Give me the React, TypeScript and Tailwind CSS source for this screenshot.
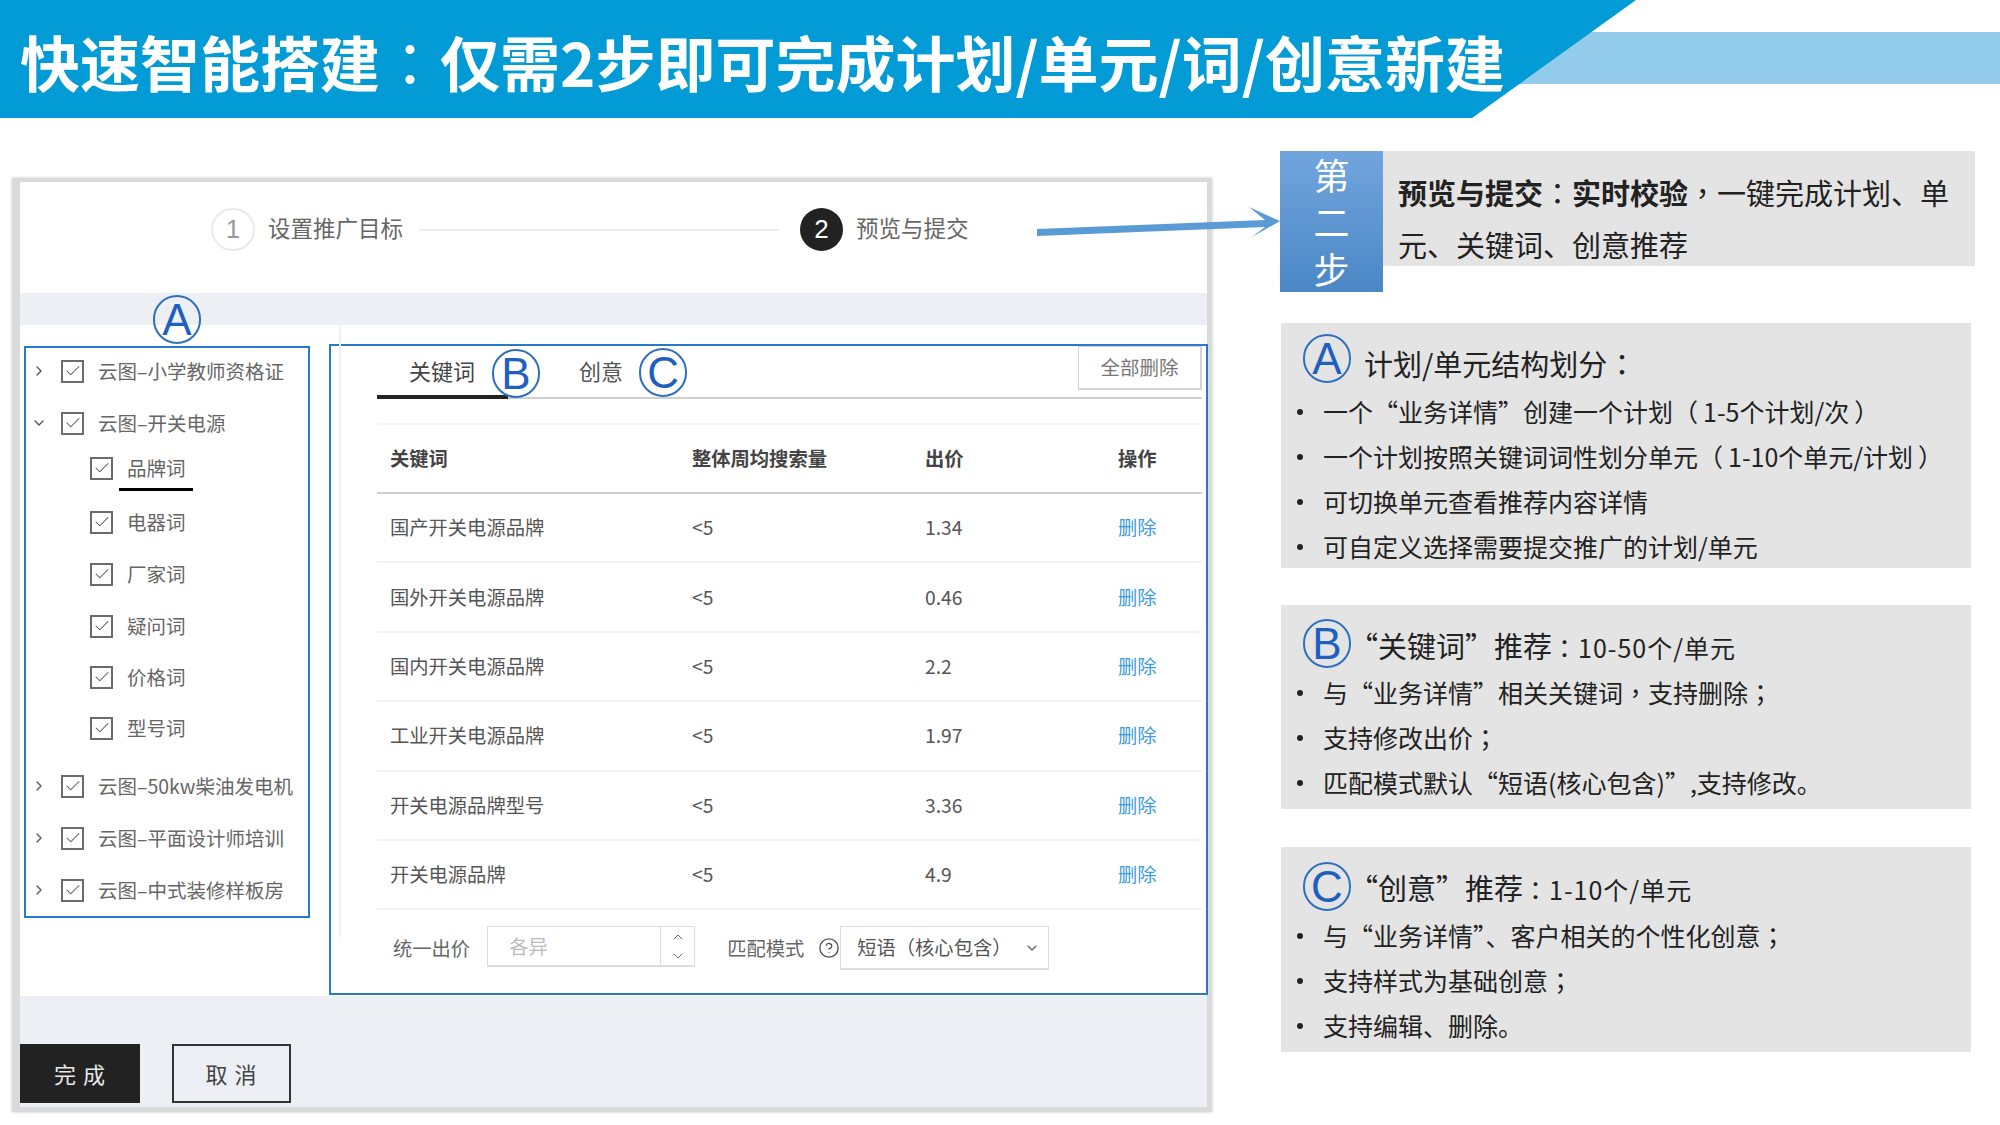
import { Check, ChevronDown, ChevronRight, ChevronUp, CircleHelp } from "lucide-react";

const TREE = [
  { label: "云图–小学教师资格证", chevron: "right", mt: "mt-0" },
  { label: "云图–开关电源", chevron: "down", mt: "mt-[8px]" },
  { label: "品牌词", child: true, active: true, mt: "mt-[1px]" },
  { label: "电器词", child: true, mt: "mt-[10px]" },
  { label: "厂家词", child: true, mt: "mt-[8px]" },
  { label: "疑问词", child: true, mt: "mt-[8px]" },
  { label: "价格词", child: true, mt: "mt-[7px]" },
  { label: "型号词", child: true, mt: "mt-[7px]" },
  { label: "云图–50kw柴油发电机", chevron: "right", mt: "mt-[14px]" },
  { label: "云图–平面设计师培训", chevron: "right", mt: "mt-[8px]" },
  { label: "云图–中式装修样板房", chevron: "right", mt: "mt-[8px]" },
];

const ROWS = [
  { word: "国产开关电源品牌", price: "1.34" },
  { word: "国外开关电源品牌", price: "0.46" },
  { word: "国内开关电源品牌", price: "2.2" },
  { word: "工业开关电源品牌", price: "1.97" },
  { word: "开关电源品牌型号", price: "3.36" },
  { word: "开关电源品牌", price: "4.9" },
];

const PANELS = [
  {
    letter: "A",
    box: "mt-[31px] h-[245px] pt-[11px]",
    titleClass: "mt-[5px] ml-[13px]",
    listClass: "mt-[6px]",
    title: "计划/单元结构划分：",
    small: "",
    items: [
      "一个“业务详情”创建一个计划（\u20091-5个计划/次\u2009）",
      "一个计划按照关键词词性划分单元（\u20091-10个单元/计划\u2009）",
      "可切换单元查看推荐内容详情",
      "可自定义选择需要提交推广的计划/单元",
    ],
  },
  {
    letter: "B",
    box: "mt-[37px] h-[204px] pt-[14px]",
    titleClass: "mt-[2px] -ml-[2px]",
    listClass: "mt-[2px]",
    title: "“关键词”推荐",
    small: "：10-50个/单元",
    items: ["与“业务详情”相关关键词，支持删除；", "支持修改出价；", "匹配模式默认“短语(核心包含)”,支持修改。"],
  },
  {
    letter: "C",
    box: "mt-[38px] h-[205px] pt-[15px]",
    titleClass: "mt-[1px] -ml-[2px]",
    listClass: "mt-[2px]",
    title: "“创意”推荐",
    small: "：1-10个/单元",
    items: ["与“业务详情”、客户相关的个性化创意；", "支持样式为基础创意；", "支持编辑、删除。"],
  },
];

// centred full-width punctuation, as the original font draws it
function withPunct(text: string) {
  return text.split(/([：，；])/).map((part, i) =>
    i % 2 === 1 ? (
      <span key={i} lang="zh-TW" className="font-['Noto_Sans_CJK_TC',sans-serif] font-normal">
        {part}
      </span>
    ) : (
      part
    )
  );
}

function Badge({ letter }: { letter: string }) {
  return (
    <div className="flex h-[49px] w-[48px] shrink-0 items-center justify-center rounded-full border-2 border-[#2f6fbe] bg-transparent font-['Liberation_Sans',sans-serif] text-[44px] leading-none text-[#1f5fbf]">
      {letter}
    </div>
  );
}

function Box() {
  return (
    <div className="flex h-[23px] w-[23px] shrink-0 items-center justify-center border-2 border-[#6b6b6b] bg-white">
      <Check size={18} strokeWidth={1.4} className="text-[#555]" />
    </div>
  );
}

export default function App() {
  return (
    <div
      lang="zh-CN"
      className="relative h-[1125px] w-[2000px] overflow-hidden bg-white font-['Noto_Sans_CJK_SC',sans-serif]"
    >
      {/* header */}
      <div className="relative h-[118px]">
        <div className="absolute left-0 right-0 top-[32px] h-[52px] bg-[#93cbea]" />
        <div className="absolute left-0 top-0 flex h-[118px] w-[1636px] items-center bg-[#039bd6] pl-[20px] [clip-path:polygon(0_0,100%_0,1472px_100%,0_100%)]">
          <h1 className="mt-[4px] whitespace-nowrap text-[60px] font-bold leading-none text-white">
            {withPunct("快速智能搭建：仅需2步即可完成计划/单元/词/创意新建")}
          </h1>
        </div>
      </div>

      <div className="flex items-start pl-[12px]">
        {/* screenshot card */}
        <div className="relative mt-[60px] flex h-[934px] w-[1200px] shrink-0 flex-col border-b-[5px] border-l-[8px] border-r-[5px] border-t-[4px] border-[#dadada] bg-[#ecf0f5] shadow-[0_0_3px_#c8c8c8]">
          {/* stepper */}
          <div className="flex h-[111px] shrink-0 items-start bg-white pl-[191px] pt-[26px] text-[22.5px] text-[#666]">
            <div className="flex h-[43px] w-[44px] items-center justify-center rounded-full border-2 border-[#eaeaea] font-['Liberation_Sans',sans-serif] text-[26px] text-[#999]">1</div>
            <span className="ml-[13px] mt-[2px] leading-[34px]">设置推广目标</span>
            <div className="ml-[16px] mt-[21px] h-[2px] w-[360px] bg-[#eeeeee]" />
            <div className="ml-[21px] flex h-[43px] w-[43px] items-center justify-center rounded-full bg-[#222] font-['Liberation_Sans',sans-serif] text-[26px] text-white">2</div>
            <span className="ml-[13px] mt-[2px] leading-[34px]">预览与提交</span>
          </div>
          <div className="h-[32px] shrink-0" />

          {/* body */}
          <div className="relative flex h-[671px] shrink-0 bg-white">
            <div className="absolute left-[133px] top-[-30px]">
              <Badge letter="A" />
            </div>
            <div className="absolute left-[319px] top-0 h-[612px] w-[2px] bg-[#f0f0f0]" />

            {/* tree */}
            <div className="ml-[4px] mt-[21px] flex h-[572px] w-[286px] shrink-0 flex-col border-2 border-[#2b78c9] pt-[1px] text-[19.5px] text-[#666]">
              {TREE.map((node) => (
                <div key={node.label} className={`flex h-[44px] shrink-0 items-center ${node.mt} ${node.child ? "pl-[64px]" : "pl-[5px]"}`}>
                  {!node.child && (
                    <span className="flex w-[30px] shrink-0 items-center text-[#555]">
                      {node.chevron === "right" ? <ChevronRight size={16} strokeWidth={2} /> : <ChevronDown size={16} strokeWidth={2} />}
                    </span>
                  )}
                  <Box />
                  <span className="relative ml-[14px] whitespace-nowrap">
                    {node.label}
                    {node.active && <span className="absolute bottom-[-8px] left-[-8px] h-[3px] w-[74px] bg-black" />}
                  </span>
                </div>
              ))}
            </div>

            {/* table box */}
            <div className="ml-[19px] mt-[19px] h-[651px] w-[879px] shrink-0 border-2 border-[#2b78c9] pl-[46px] pr-[4px]">
              <div className="flex h-[53px] items-center border-b-2 border-[#d0d0d0] text-[22px]">
                <div className="relative flex h-[51px] w-[131px] shrink-0 items-center pb-[2px] pl-[32px] text-[#444]">
                  关键词
                  <span className="absolute bottom-[-2px] left-0 h-[4px] w-[131px] bg-[#222]" />
                </div>
                <div className="relative z-10 -ml-[16px] mt-[4px]">
                  <Badge letter="B" />
                </div>
                <span className="mb-[2px] ml-[39px] text-[#555]">创意</span>
                <div className="ml-[16px] mt-[2px]">
                  <Badge letter="C" />
                </div>
                <button className="mb-[8px] ml-auto flex h-[44px] w-[124px] items-center justify-center border border-b-2 border-r-2 border-[#d4d4d4] text-[19.5px] text-[#777]">
                  全部删除
                </button>
              </div>

              <div className="mt-[24px] border-t-2 border-[#f6f6f6]">
                <div className="flex h-[69px] items-center border-b-2 border-[#d0d0d0] pl-[13px] text-[19.3px] font-bold text-[#444]">
                  <span className="w-[302px]">关键词</span>
                  <span className="w-[233px]">整体周均搜索量</span>
                  <span className="w-[193px]">出价</span>
                  <span>操作</span>
                </div>
                {ROWS.map((row) => (
                  <div key={row.word} className="flex h-[69.4px] items-center border-b-2 border-[#f2f2f2] pl-[13px] text-[19.3px] text-[#555]">
                    <span className="w-[302px]">{row.word}</span>
                    <span className="w-[233px]">&lt;5</span>
                    <span className="w-[193px]">{row.price}</span>
                    <span className="text-[#3e9bdc]">删除</span>
                  </div>
                ))}
              </div>

              <div className="mt-[16px] flex items-start pl-[16px] text-[19.3px] text-[#666]">
                <span className="mt-[8px]">统一出价</span>
                <div className="ml-[17px] flex h-[41px] w-[208px] items-center border border-b-2 border-[#dddddd]">
                  <span className="ml-[21px] text-[#bbbbbb]">各异</span>
                  <div className="ml-auto flex h-[41px] w-[34px] flex-col items-center justify-center border-l border-[#dddddd] text-[#666]">
                    <ChevronUp size={16} strokeWidth={1.5} />
                    <ChevronDown size={16} strokeWidth={1.5} className="mt-[3px]" />
                  </div>
                </div>
                <span className="ml-[32px] mt-[8px]">匹配模式</span>
                <CircleHelp size={22} strokeWidth={1.5} className="ml-[14px] mt-[11px] shrink-0 text-[#555]" />
                <div className="flex h-[44px] w-[209px] items-center border border-b-2 border-[#dddddd] pl-[16px] text-[#555]">
                  短语（核心包含）
                  <ChevronDown size={16} strokeWidth={1.7} className="ml-auto mr-[8px]" />
                </div>
              </div>
            </div>
          </div>

          {/* footer buttons */}
          <div className="flex flex-1 items-end pb-[4px] text-[22px]">
            <button className="h-[59px] w-[120px] bg-[#222] tracking-[1px] text-[#e8e8e8]">完 成</button>
            <button className="ml-[32px] h-[59px] w-[119px] border-2 border-[#333] tracking-[1px] text-[#444]">取 消</button>
          </div>
        </div>

        {/* right column */}
        <div className="ml-[68px] mt-[33px] flex flex-col">
          <div className="flex items-start">
            <div className="flex h-[141px] w-[103px] shrink-0 flex-col items-center justify-center bg-gradient-to-b from-[#72a5dd] to-[#4a87c6] text-[36px] leading-[47px] text-white">
              <span>第</span>
              <span>二</span>
              <span>步</span>
            </div>
            <div className="h-[115px] w-[592px] bg-[#e4e4e4] pl-[15px] pt-[15px] text-[29px] leading-[52px] text-[#222]">
              <div className="whitespace-nowrap">
                <b>预览与提交</b>
                {withPunct("：")}
                <b>实时校验</b>
                {withPunct("，")}一键完成计划、单
              </div>
              <div className="whitespace-nowrap">元、关键词、创意推荐</div>
            </div>
          </div>

          {PANELS.map((panel) => (
            <div key={panel.letter} className={`ml-px w-[690px] bg-[#e4e4e4] ${panel.box}`}>
              <div className="flex h-[49px] items-start pl-[22px]">
                <Badge letter={panel.letter} />
                <span className={`whitespace-nowrap text-[29px] leading-[48px] text-[#222] ${panel.titleClass}`}>
                  {withPunct(panel.title)}
                  {panel.small && <span className="text-[25px] tracking-[1px]">{withPunct(panel.small)}</span>}
                </span>
              </div>
              <ul className={`text-[25px] text-[#222] ${panel.listClass}`}>
                {panel.items.map((item) => (
                  <li key={item} className="flex h-[45px] items-center whitespace-nowrap pl-[16px]">
                    <span className="mr-[20px] h-[6px] w-[6px] shrink-0 rounded-full bg-[#222]" />
                    <span>{withPunct(item)}</span>
                  </li>
                ))}
              </ul>
            </div>
          ))}
        </div>
      </div>

      {/* arrow over the card edge */}
      <svg className="absolute left-[1030px] top-[200px]" width="255" height="45" viewBox="0 0 255 45">
        <polygon points="7,29 235,20 219,7 250,21 222,37 235,27 7,36" fill="#5b9bd5" />
      </svg>
    </div>
  );
}
